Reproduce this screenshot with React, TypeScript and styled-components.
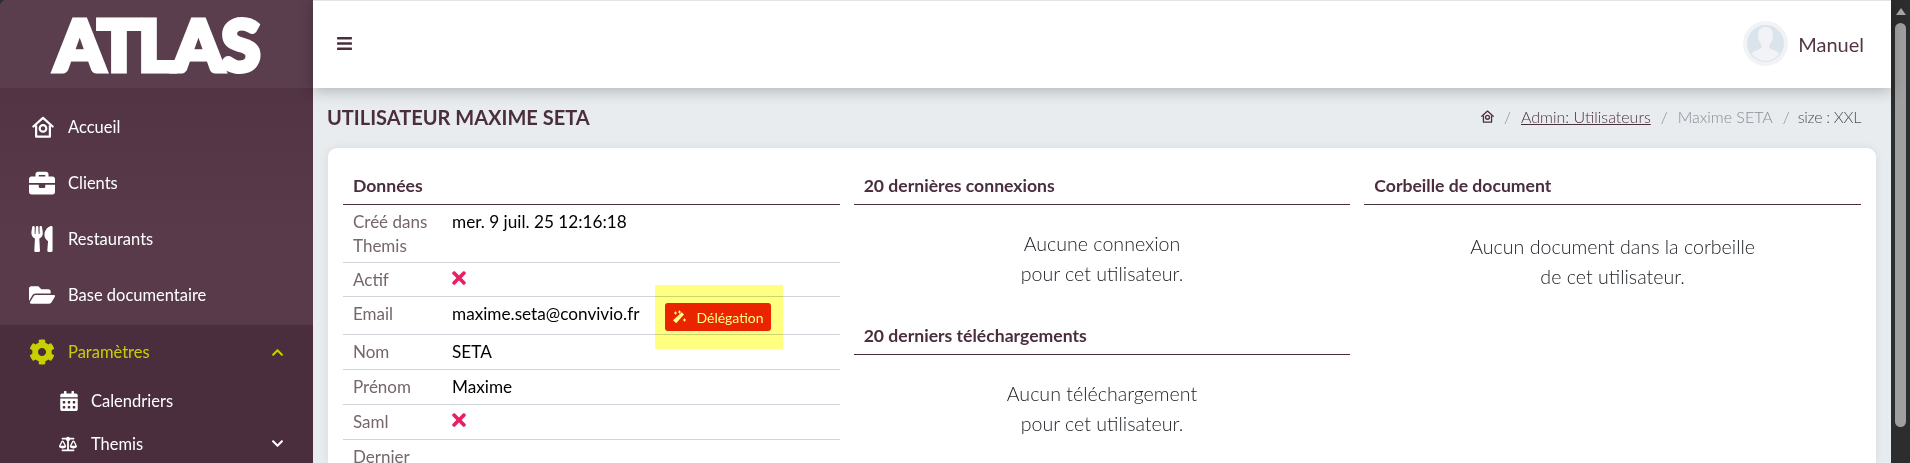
import React from 'react';
import styled, { createGlobalStyle } from 'styled-components';
import {
  FaBalanceScale, FaBars, FaBriefcase, FaCalendarAlt, FaChevronDown, FaChevronUp,
  FaCog, FaFolderOpen, FaTimes, FaUtensils,
} from 'react-icons/fa';

const GlobalStyle = createGlobalStyle`
  html, body {
    margin: 0;
    height: 463px;
    overflow: hidden;
    background: #2d2d2d;
    font-family: Lato, "Liberation Sans", sans-serif;
  }
`;

const Page = styled.div`
  display: flex;
  width: 1910px;
  height: 463px;
  overflow: hidden;
`;

const Sidebar = styled.aside`
  flex: 0 0 313px;
  display: flex;
  flex-direction: column;
  background: linear-gradient(#4e3040, #583a4a 235px);
  border-top-left-radius: 6px;
  overflow: hidden;
`;

const LogoBar = styled.div`
  height: 88px;
  flex: none;
  background: #5a3e4d;
  display: flex;
  align-items: center;
  justify-content: center;
`;

const Logo = styled.div`
  color: #fff;
  font-weight: 900;
  font-size: 71px;
  line-height: 88px;
  letter-spacing: -2px;
  -webkit-text-stroke: 5px #fff;
`;

const NavList = styled.nav`
  display: flex;
  flex-direction: column;
  padding: 11px 0 2px;
`;

const NavItem = styled.div`
  height: 56px;
  flex: none;
  display: flex;
  align-items: center;
  padding-left: 29px;
  color: #fff;
  font-size: 16.5px;
`;

const ActiveNavItem = styled(NavItem)`
  height: 54px;
  color: #c9cf00;
`;

const NavIcon = styled.span<{ $inset?: number }>`
  flex: none;
  width: 39px;
  display: flex;
  align-items: center;
  font-size: 26px;
  padding-left: ${(p) => p.$inset || 0}px;
  box-sizing: border-box;
`;

const Submenu = styled.div`
  background: #4a2e3e;
  display: flex;
  flex-direction: column;
  flex: 1;
`;

const SubItem = styled.div`
  height: 43px;
  flex: none;
  display: flex;
  align-items: center;
  padding-left: 59px;
  color: #fff;
  font-size: 16.5px;
`;

const SubIcon = styled.span<{ $size: number }>`
  flex: none;
  width: 32px;
  display: flex;
  align-items: center;
  font-size: ${(p) => p.$size}px;
`;

const Caret = styled.span`
  margin-left: auto;
  margin-right: 29px;
  display: flex;
  font-size: 13px;
`;

const Main = styled.main`
  flex: 1;
  display: flex;
  flex-direction: column;
  min-width: 0;
  min-height: 0;
  background: #e9ecef;
`;

const TopBar = styled.header`
  height: 88px;
  flex: none;
  box-sizing: border-box;
  background: #fff;
  border-top: 1px solid #e4e4e4;
  display: flex;
  align-items: center;
  padding: 0 27px 2px 23px;
  box-shadow: 0 3px 14px rgba(0, 0, 0, 0.24);
  position: relative;
  color: #4a2e3e;
`;

const Burger = styled.span`
  display: flex;
  font-size: 17px;
`;

const UserBlock = styled.div`
  margin-left: auto;
  display: flex;
  align-items: center;
  gap: 10px;
  font-size: 20px;
  color: #533545;
`;

const TitleRow = styled.div`
  flex: none;
  display: flex;
  align-items: center;
  justify-content: space-between;
  height: 60px;
  box-sizing: border-box;
  padding: 0 30px 2px 14px;
`;

const Title = styled.h1`
  margin: 0;
  font-size: 20px;
  font-weight: 700;
  color: #4a2e3e;
`;

const Crumbs = styled.div`
  display: flex;
  align-items: center;
  gap: 10px;
  padding-bottom: 2px;
  font-size: 16px;
  font-weight: 300;
  color: #868e96;
`;

const CrumbHome = styled.span`
  display: flex;
  color: #4a2e3e;
`;

const CrumbLink = styled.a`
  color: #4a2e3e;
  text-decoration: underline;
`;

const CrumbSize = styled.span`
  color: #495057;
  letter-spacing: -0.3px;
  margin-left: -2px;
`;

const Card = styled.section`
  background: #fff;
  margin: 0 15px;
  border-radius: 9px 9px 0 0;
  box-shadow: 0 0 10px rgba(0, 0, 0, 0.07);
  flex: 1;
  min-height: 0;
  overflow: hidden;
  box-sizing: border-box;
  padding: 27px 15px 0;
  display: grid;
  grid-template-columns: repeat(3, 1fr);
  column-gap: 14px;
  align-items: start;
`;

const Column = styled.div`
  display: flex;
  flex-direction: column;
`;

const SectionTitle = styled.h2`
  margin: 0;
  padding: 0 10px;
  height: 30px;
  box-sizing: border-box;
  font-size: 17.6px;
  font-weight: 700;
  line-height: 22px;
  color: #4a2e3e;
  border-bottom: 1px solid #4a2e3e;
`;

const Row = styled.div<{ $height: number }>`
  display: grid;
  grid-template-columns: 99px 1fr;
  align-items: start;
  height: ${(p) => p.$height}px;
  padding: 5px 0 0 10px;
  box-sizing: border-box;
  border-bottom: 1px solid #ced4da;
  line-height: 24px;
  font-size: 17.2px;
`;

const Label = styled.div`
  color: #75656e;
  font-size: 17px;
`;

const Value = styled.div`
  color: #000;
  display: flex;
  align-items: center;
  min-height: 24px;
`;

const RedCross = styled(FaTimes)`
  color: #e91e63;
  width: 14px;
  height: 20px;
  margin-top: -4px;
`;

const DelegationSlot = styled.span`
  position: relative;
  display: inline-flex;
  align-self: flex-start;
  margin: 1px 0 -5px 26px;
  &::after {
    content: '';
    position: absolute;
    inset: -18px -12px -18px -10px;
    background: #ffff80;
    mix-blend-mode: multiply;
  }
`;

const DelegationButton = styled.button`
  display: inline-flex;
  align-items: center;
  gap: 10px;
  height: 28px;
  padding: 0 7px;
  background: #ea2300;
  border: 0;
  border-radius: 3px;
  color: #fff;
  font: 400 14px Lato, sans-serif;
`;

const EmptyNote = styled.p<{ $top: number; $gap: number }>`
  margin: 0;
  padding: ${(p) => p.$top}px 0 ${(p) => p.$gap}px;
  text-align: center;
  font-size: 19.6px;
  font-weight: 300;
  line-height: 30px;
  color: #212529;
`;

const Scrollbar = styled.div`
  flex: 0 0 19px;
  background: #2d2d2d;
  display: flex;
  flex-direction: column;
  align-items: center;
`;

const ScrollArrow = styled.div`
  margin-top: 8px;
  width: 0;
  height: 0;
  border-left: 5px solid transparent;
  border-right: 5px solid transparent;
  border-bottom: 7px solid #a8a8a8;
`;

const ScrollThumb = styled.div`
  margin-top: 8px;
  width: 11px;
  height: 404px;
  background: #9f9f9f;
  border-radius: 6px;
`;

const HouseIcon = ({ size }: { size: number }) => (
  <svg width={size} height={size} viewBox="0 0 24 24" fill="none" stroke="currentColor" strokeWidth="2.4">
    <path d="M1.500 11.500 12 2l10.500 9.500" strokeLinejoin="round" strokeLinecap="round" />
    <path d="M4.500 10v12.500h15V10" strokeLinejoin="round" />
    <circle cx="12" cy="13.500" r="3.600" />
  </svg>
);

const WandIcon = () => (
  <svg width="14" height="14" viewBox="0 0 14 14" fill="currentColor">
    <path d="M9.800 2.200 12 4.400 4.200 13.200 1 10.200z" />
    <path d="M3 1.500h1v1h1v1H4v1H3v-1H2v-1h1zM7 .5h1v1h1v1H8v1H7v-1H6v-1h1zM12 8.500h1v1h1v1h-1v1h-1v-1h-1v-1h1z" />
  </svg>
);

const Avatar = () => (
  <svg width="45" height="45" viewBox="0 0 45 45">
    <circle cx="22.500" cy="22.500" r="22.500" fill="#f1f3f6" />
    <circle cx="22.500" cy="22.500" r="18.500" fill="#dce4eb" />
    <path d="M15 14c0-6 3.500-8 7.500-8s7.500 2 7.500 8c0 4-1.500 7.500-3.500 9.500v3.500c3 2 7.500 3 10 5.500-3 4.500-8.500 7.500-14 7.500s-11-3-14-7.500c2.500-2.500 7-3.500 10-5.500v-3.500c-2-2-3.500-5.500-3.500-9.500z" fill="#f1f3f6" />
  </svg>
);

const App = () => (
  <Page>
    <GlobalStyle />
    <Sidebar>
      <LogoBar><Logo>ATLAS</Logo></LogoBar>
      <NavList>
        <NavItem><NavIcon $inset={3}><HouseIcon size={22} /></NavIcon>Accueil</NavItem>
        <NavItem><NavIcon><FaBriefcase /></NavIcon>Clients</NavItem>
        <NavItem><NavIcon><FaUtensils /></NavIcon>Restaurants</NavItem>
        <NavItem><NavIcon><FaFolderOpen /></NavIcon>Base documentaire</NavItem>
      </NavList>
      <Submenu>
        <ActiveNavItem><NavIcon><FaCog /></NavIcon>Paramètres<Caret><FaChevronUp /></Caret></ActiveNavItem>
        <SubItem><SubIcon $size={20}><FaCalendarAlt /></SubIcon>Calendriers</SubItem>
        <SubItem><SubIcon $size={18}><FaBalanceScale /></SubIcon>Themis<Caret><FaChevronDown /></Caret></SubItem>
      </Submenu>
    </Sidebar>
    <Main>
      <TopBar>
        <Burger><FaBars /></Burger>
        <UserBlock><Avatar />Manuel</UserBlock>
      </TopBar>
      <TitleRow>
        <Title>UTILISATEUR MAXIME SETA</Title>
        <Crumbs>
          <CrumbHome><HouseIcon size={13} /></CrumbHome>
          <span>/</span>
          <CrumbLink>Admin: Utilisateurs</CrumbLink>
          <span>/</span>
          <span>Maxime SETA</span>
          <span>/</span>
          <CrumbSize>size : XXL</CrumbSize>
        </Crumbs>
      </TitleRow>
      <Card>
        <Column>
          <SectionTitle>Données</SectionTitle>
          <Row $height={58}><Label>Créé dans Themis</Label><Value>mer. 9 juil. 25 12:16:18</Value></Row>
          <Row $height={34}><Label>Actif</Label><Value><RedCross /></Value></Row>
          <Row $height={38}>
            <Label>Email</Label>
            <Value>
              maxime.seta@convivio.fr
              <DelegationSlot>
                <DelegationButton><WandIcon />Délégation</DelegationButton>
              </DelegationSlot>
            </Value>
          </Row>
          <Row $height={35}><Label>Nom</Label><Value>SETA</Value></Row>
          <Row $height={35}><Label>Prénom</Label><Value>Maxime</Value></Row>
          <Row $height={35}><Label>Saml</Label><Value><RedCross /></Value></Row>
          <Row $height={58}><Label>Dernier</Label><Value /></Row>
        </Column>
        <Column>
          <SectionTitle>20 dernières connexions</SectionTitle>
          <EmptyNote $top={24} $gap={36}>Aucune connexion<br />pour cet utilisateur.</EmptyNote>
          <SectionTitle>20 derniers téléchargements</SectionTitle>
          <EmptyNote $top={24} $gap={0}>Aucun téléchargement<br />pour cet utilisateur.</EmptyNote>
        </Column>
        <Column>
          <SectionTitle>Corbeille de document</SectionTitle>
          <EmptyNote $top={27} $gap={0}>Aucun document dans la corbeille<br />de cet utilisateur.</EmptyNote>
        </Column>
      </Card>
    </Main>
    <Scrollbar><ScrollArrow /><ScrollThumb /></Scrollbar>
  </Page>
);

export default App;
